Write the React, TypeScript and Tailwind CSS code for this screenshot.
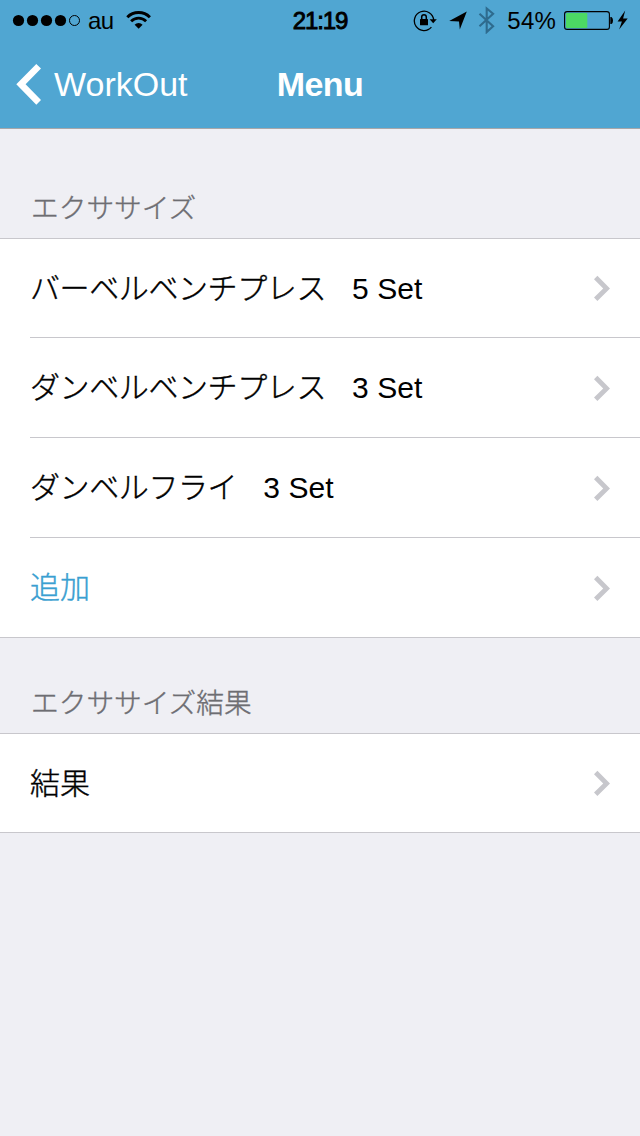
import type { ReactNode } from "react";

type Item = {
  label: string;
  sets?: string;
  action?: boolean;
};

const exercises: Item[] = [
  { label: "バーベルベンチプレス", sets: "5 Set" },
  { label: "ダンベルベンチプレス", sets: "3 Set" },
  { label: "ダンベルフライ", sets: "3 Set" },
  { label: "追加", action: true },
];

const results: Item[] = [{ label: "結果" }];

const SignalDots = () => (
  <svg className="ml-3 h-4 w-[70px] shrink-0" viewBox="0 0 70 16">
    {[6.5, 20.5, 34.5, 48.5].map((cx) => (
      <circle key={cx} cx={cx} cy="8.5" r="5.6" />
    ))}
    <circle cx="62.5" cy="8.5" r="5" fill="none" stroke="#000" strokeWidth="1" />
  </svg>
);

const WifiIcon = () => (
  <svg className="ml-3 h-5 w-[26px] shrink-0" viewBox="0 0 26 20">
    <g fill="none" stroke="#000">
      <path d="M1.3 7.2a16 16 0 0 1 22.6 0" strokeWidth="3" />
      <path d="M5.1 11.3a10.6 10.6 0 0 1 15 0" strokeWidth="2.8" />
    </g>
    <path d="M12.6 18.8l-4-4.1a5.7 5.7 0 0 1 8 0z" />
  </svg>
);

const RotationLockIcon = () => (
  <svg className="h-6 w-6 shrink-0" viewBox="0 0 24 24">
    <path d="M18.4 19.2A9.7 9.7 0 1 1 20.7 12" fill="none" stroke="#000" strokeWidth="1.3" />
    <path d="M16.6 11.2h7.2l-3.6 4z" />
    <rect x="7" y="11" width="8" height="6.3" rx=".5" />
    <path d="M8.7 11.5V9a2.3 2.3 0 0 1 4.6 0v2.5" fill="none" stroke="#000" strokeWidth="1.5" />
  </svg>
);

const LocationIcon = () => (
  <svg className="ml-3 h-5 w-[18px] shrink-0" viewBox="0 0 18 20">
    <path d="M17.8 1.6L10.8 19.4l-.8-7.9-9.8-.6z" />
  </svg>
);

const BluetoothIcon = () => (
  <svg className="ml-[11px] h-7 w-[18px] shrink-0" viewBox="0 0 18 28">
    <path
      d="M1.5 7.8l13.6 12.5-6.4 5.8V2.4l6.4 5.4L1.5 20.3"
      fill="none"
      stroke="#2e6b8e"
      strokeWidth="2.1"
    />
  </svg>
);

const BatteryIcon = () => (
  <svg className="h-5 w-[65px] shrink-0" viewBox="0 0 65 20">
    <rect x=".6" y="1.6" width="44.8" height="17.8" rx="2.5" fill="none" stroke="#000" strokeWidth="1.1" />
    <rect x="2" y="3" width="21.3" height="15" rx="1" fill="#4cd964" />
    <path d="M46.3 7h1.2q1.5 1 1.5 3.5t-1.5 3.5h-1.2z" />
    <path d="M61.2 .6l-7.6 10.8h4.3l-2.8 8.2 8.6-11.2h-4.6z" />
  </svg>
);

const StatusBar = () => (
  <div className="grid h-10 grid-cols-3 items-center text-2xl text-black">
    <div className="flex items-center">
      <SignalDots />
      <span className="ml-1.5 pt-0.5 tracking-[-0.5px]">au</span>
      <WifiIcon />
    </div>
    <div className="pt-0.5 text-center tracking-[-1.1px] [-webkit-text-stroke:0.9px_black]">21:19</div>
    <div className="flex items-center justify-end pr-3">
      <RotationLockIcon />
      <LocationIcon />
      <BluetoothIcon />
      <span className="ml-[11px] pt-0.5 tracking-[0.2px]">54%</span>
      <span className="-mr-px ml-2 flex">
        <BatteryIcon />
      </span>
    </div>
  </div>
);

const NavBar = () => (
  <div className="grid h-[88px] grid-cols-3 items-center text-[34px] text-white">
    <div className="flex items-center pl-4">
      <svg className="h-[42px] w-[26px]" viewBox="0 0 26 42">
        <path d="M20.3 .9L25 5.6 9.6 21.3 25 37l-4.7 4.7L.3 21.3z" fill="#fff" />
      </svg>
      <span className="ml-3">WorkOut</span>
    </div>
    <h1 className="text-center font-bold tracking-[-0.6px]">Menu</h1>
  </div>
);

const Row = ({ item }: { item: Item }) => (
  <li className="ml-[30px] flex h-[100px] items-center border-b border-[#c8c7cc] pr-[30px] text-[30px] first:h-[99px] last:ml-0 last:pl-[30px]">
    {item.sets ? (
      <>
        <span className="font-light tracking-[-0.4px] [-webkit-text-stroke:0.4px_currentColor]">{item.label}</span>
        <span className="ml-[26px] tracking-[0.1px]">{item.sets}</span>
      </>
    ) : (
      <span
        className={
          item.action
            ? "font-light text-[#3a9fd1] [-webkit-text-stroke:0.4px_currentColor]"
            : "font-light [-webkit-text-stroke:0.4px_currentColor]"
        }
      >
        {item.label}
      </span>
    )}
    <svg className="ml-auto h-[26px] w-4" viewBox="0 0 16 26">
      <path d="M3.4 .8L16 13.4 3.4 26 0 22.6l9.2-9.2L0 4.2z" fill="#c7c7cc" />
    </svg>
  </li>
);

const Group = ({ title, items }: { title: ReactNode; items: Item[] }) => (
  <section>
    <h2 className="px-[31px] pb-[9px] text-[27.7px] font-light leading-10 text-[#6d6d72] [-webkit-text-stroke:0.4px_currentColor]">
      {title}
    </h2>
    <ul className="border-t border-[#c8c7cc] bg-white text-black">
      {items.map((item) => (
        <Row key={item.label} item={item} />
      ))}
    </ul>
  </section>
);

const App = () => {
  return (
    <div className="min-h-screen bg-[#efeff4] font-['Liberation_Sans','Noto_Sans_CJK_JP',sans-serif]">
      <header className="border-b border-[#a7a7aa] bg-[#50a6d2]">
        <StatusBar />
        <NavBar />
      </header>
      <main className="flex flex-col gap-[46px] pt-[60px]">
        <Group title="エクササイズ" items={exercises} />
        <Group title="エクササイズ結果" items={results} />
      </main>
    </div>
  );
};

export default App;
